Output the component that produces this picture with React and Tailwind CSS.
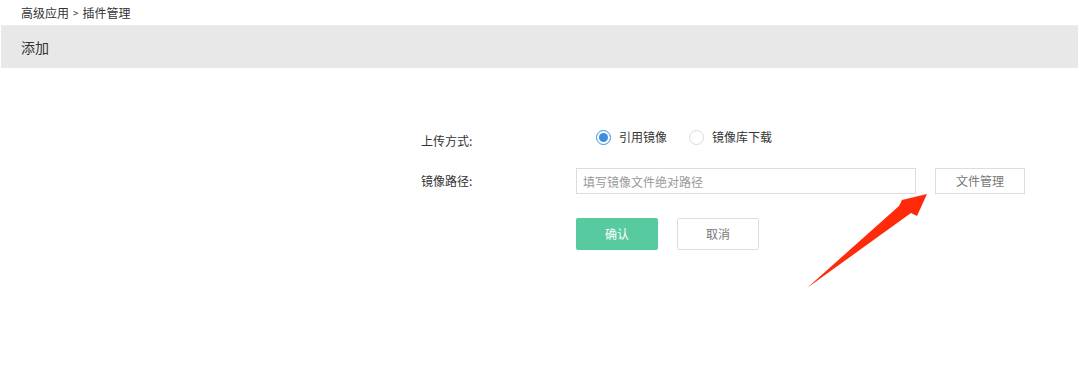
import React from "react";

const font = { fontFamily: '"Noto Sans CJK SC", "Liberation Sans", sans-serif' };

const Radio = ({ checked, label }) => (
  <label className="flex items-center gap-[8px] cursor-pointer">
    <span
      className={`w-[15px] h-[15px] rounded-full border flex items-center justify-center ${
        checked ? "border-[#3b8fdc]" : "border-[#d9d9d9]"
      }`}
    >
      {checked && <span className="w-[9px] h-[9px] rounded-full bg-[#3b8fdc]" />}
    </span>
    <span className="text-[12px] text-[#333]">{label}</span>
  </label>
);

export default function App() {
  return (
    <div className="relative w-[1079px] h-[391px] bg-white overflow-hidden" style={font}>
      {/* breadcrumb */}
      <div className="h-[25px] flex items-center pl-[21px] text-[12px] text-[#333]">
        高级应用 <span className="mx-[4px] text-[10px]">&gt;</span> 插件管理
      </div>

      {/* header bar */}
      <div className="h-[43px] mx-[1px] bg-[#e8e8e8] border-t border-[#ededed] flex items-center pl-[20px] text-[14px] text-[#333]">
        添加
      </div>

      {/* form */}
      <div className="ml-[421px] pt-[59px] flex flex-col">
        <div className="flex items-start h-[20px]">
          <div className="w-[155px] mt-[4px] leading-[20px] text-[12px] text-[#333]">上传方式:</div>
          <div className="flex items-center gap-[22px] pl-[20px] h-[20px]">
            <Radio checked label="引用镜像" />
            <Radio label="镜像库下载" />
          </div>
        </div>

        <div className="flex items-center h-[26px] mt-[21px]">
          <div className="w-[155px] text-[12px] text-[#333]">镜像路径:</div>
          <input
            placeholder="填写镜像文件绝对路径"
            className="w-[340px] h-[26px] border border-[#ddd] px-[6px] text-[12px] text-[#333] placeholder-[#999] outline-none"
          />
          <button className="ml-[19px] w-[90px] h-[26px] border border-[#ddd] text-[12px] text-[#777] bg-white">
            文件管理
          </button>
        </div>

        <div className="flex gap-[19px] mt-[24px] pl-[155px]">
          <button className="w-[82px] h-[32px] rounded-[2px] bg-[#57cb9f] text-white text-[12px]">确认</button>
          <button className="w-[82px] h-[32px] rounded-[2px] border border-[#ddd] bg-white text-[#777] text-[12px]">
            取消
          </button>
        </div>
      </div>

      {/* annotation arrow */}
      <svg className="absolute inset-0 pointer-events-none" width="1079" height="391" viewBox="0 0 1079 391">
        <polygon
          points="807,288 899,206 902,200 927,194 917,216 911,213"
          fill="#ff2a0a"
        />
      </svg>
    </div>
  );
}
